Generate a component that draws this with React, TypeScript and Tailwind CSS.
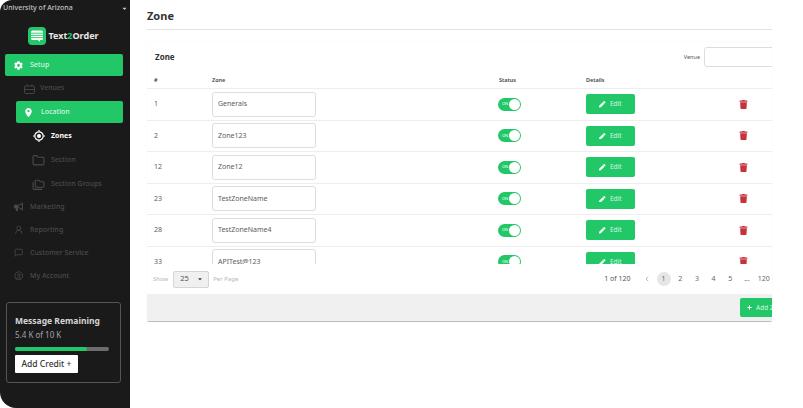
import React from "react";
import { FaCog, FaBullhorn, FaTrash, FaPen, FaCaretDown, FaPlus } from "react-icons/fa";
import { MdLocationOn } from "react-icons/md";
import { LuFolder, LuFolders, LuUserRound, LuMessageSquare, LuCircleUser, LuChevronLeft } from "react-icons/lu";

const rows = [
  ["1", "Generals"],
  ["2", "Zone123"],
  ["12", "Zone12"],
  ["23", "TestZoneName"],
  ["28", "TestZoneName4"],
  ["33", "APITest@123"],
];

function SubItem({ icon, label, active }: { icon: React.ReactNode; label: string; active?: boolean }) {
  return (
    <div className={`flex h-[24px] items-center text-[7px] ${active ? "font-bold text-white" : "font-medium text-[#4a4a4a]"}`}>
      <span className="flex w-[51px] justify-center pl-[26px] text-[13px]">{icon}</span>
      <span>{label}</span>
    </div>
  );
}

function MainItem({ icon, label }: { icon: React.ReactNode; label: string }) {
  return (
    <div className="flex h-[23px] items-center text-[7px] font-medium text-[#4a4a4a]">
      <span className="flex w-[30px] justify-center pl-[7px] text-[9.5px]">{icon}</span>
      <span>{label}</span>
    </div>
  );
}

function Logo() {
  return (
    <svg width="18" height="18" viewBox="0 0 18 18">
      <rect width="18" height="18" rx="4" fill="#22c768" />
      <path d="M4.5 3.5h9a1.5 1.5 0 0 1 1.5 1.5v6.5a1.5 1.5 0 0 1-1.5 1.5H12v1.8L9.7 13H4.5A1.5 1.5 0 0 1 3 11.5V5a1.5 1.5 0 0 1 1.5-1.5z" fill="#fff" />
      <path d="M3 6.2h12M3 8.4h12M3 10.6h12" stroke="#22c768" strokeWidth="0.9" />
    </svg>
  );
}

function VenueIcon() {
  return (
    <svg width="11" height="10" viewBox="0 0 11 10" fill="none" stroke="#4a4a4a" strokeWidth="0.9">
      <rect x="0.5" y="2" width="10" height="7.5" rx="1" />
      <path d="M0.5 5.5h10M3 2V0.5M8 2V0.5" />
    </svg>
  );
}

function ZoneTarget() {
  return (
    <svg width="12" height="12" viewBox="0 0 12 12" fill="none">
      <circle cx="6" cy="6" r="4.2" stroke="#fff" strokeWidth="1.2" />
      <circle cx="6" cy="6" r="2" fill="#fff" />
      <path d="M6 0v1.6M6 10.4V12M0 6h1.6M10.4 6H12" stroke="#fff" strokeWidth="1.2" />
    </svg>
  );
}

function Row({ id, name }: { id: string; name: string }) {
  return (
    <div className="grid h-[31.5px] shrink-0 grid-cols-[58px_287px_87px_138px_38px] items-center border-t border-[#eeeeee] pl-[7px] text-[7px] text-[#5c5c5c]">
      <span>{id}</span>
      <div className="flex h-[25px] w-[104px] items-center rounded-[3px] border border-[#dddddd] px-[5px]">{name}</div>
      <div className="-ml-[1px] flex h-[13px] w-[23px] items-center justify-between rounded-full bg-[#22c768] pl-[4px] pr-[1px] text-[4px] text-white">
        <span>ON</span>
        <span className="h-[11px] w-[11px] rounded-full bg-white" />
      </div>
      <div className="flex h-[20px] w-[49px] items-center justify-center gap-[4px] rounded-[2px] bg-[#22c768] text-[6.5px] text-[#d8f5e4]">
        <FaPen className="text-[6.5px] text-white" />
        <span>Edit</span>
      </div>
      <div className="flex justify-center text-[9px] text-[#c8323f]">
        <FaTrash />
      </div>
    </div>
  );
}

export default function App() {
  return (
    <div className="flex h-[408px] w-[803px] overflow-hidden bg-white font-['Noto_Sans',sans-serif]">
      <aside className="flex h-[408px] w-[130px] shrink-0 flex-col rounded-tl-[12px] rounded-bl-[16px] bg-[#1a1a1b]">
        <div className="flex h-[17px] items-center justify-between pl-[3px] pr-[2px] text-[7px] font-medium text-[#c4c4c4]">
          <span>University of Arizona</span>
          <FaCaretDown className="text-[7px]" />
        </div>
        <div className="mt-[10px] flex h-[18px] items-center justify-center gap-[2px] pr-[3px]">
          <Logo />
          <span className="text-[9px] font-bold text-[#e8e8e8]">
            Text<span className="text-[#22c768]">2</span>Order
          </span>
        </div>
        <div className="mx-[5px] mt-[9px] flex h-[22px] w-[118px] items-center rounded-[2px] bg-[#22c768] text-[7px] font-medium text-[#d8f5e4]">
          <FaCog className="ml-[9px] mr-[7px] text-[9px] text-white" />
          <span>Setup</span>
        </div>
        <div className="flex h-[25px] items-center text-[7px] font-medium text-[#4a4a4a]">
          <span className="ml-[24px] mr-[5px] flex"><VenueIcon /></span>
          <span>Venues</span>
        </div>
        <div className="ml-[16px] flex h-[22px] w-[107px] items-center rounded-[2px] bg-[#22c768] text-[7px] font-medium text-[#d8f5e4]">
          <MdLocationOn className="ml-[7px] mr-[7px] text-[11px] text-white" />
          <span>Location</span>
        </div>
        <div className="mt-[1px]">
          <SubItem icon={<ZoneTarget />} label="Zones" active />
          <SubItem icon={<LuFolder />} label="Section" />
          <SubItem icon={<LuFolders />} label="Section Groups" />
        </div>
        <div className="-mt-[0.5px]">
          <MainItem icon={<FaBullhorn />} label="Marketing" />
          <MainItem icon={<LuUserRound />} label="Reporting" />
          <MainItem icon={<LuMessageSquare />} label="Customer Service" />
          <MainItem icon={<LuCircleUser />} label="My Account" />
        </div>
        <div className="mb-[25px] ml-[6px] mr-[9px] mt-auto flex h-[81px] flex-col rounded-[3px] border-[1.5px] border-[#555555] px-[8px] pt-[12px]">
          <span className="text-[8.5px] font-bold leading-[12px] text-[#d6d6d6]">Message Remaining</span>
          <span className="mt-[2px] text-[8px] leading-[12px] text-[#a3a3a3]">5.4 K of 10 K</span>
          <div className="mt-[6px] h-[4px] w-[94px] rounded-full bg-[#6d6d6d]">
            <div className="h-[4px] w-[72px] rounded-full bg-[#22c768]" />
          </div>
          <div className="mt-[4px] flex h-[18px] w-[63px] items-center justify-center rounded-[1px] bg-white text-[8.5px] font-medium text-[#333333]">
            Add Credit +
          </div>
        </div>
      </aside>
      <main className="flex min-w-0 flex-1 flex-col pl-[17px] pr-[31px]">
        <div className="flex h-[30px] items-center border-b border-[#e3e3e3] pt-[3px] text-[11px] font-bold text-[#333333]">Zone</div>
        <section className="mt-[12px] flex h-[280px] flex-col overflow-hidden rounded-[2px] border-b border-[#bdbdbd] shadow-[0_0_2px_rgba(0,0,0,0.06)]">
          <div className="flex h-[30px] shrink-0 items-center pl-[8px]">
            <span className="text-[8px] font-bold text-[#333333]">Zone</span>
            <span className="ml-auto mr-[4px] text-[5.5px] text-[#555555]">Venue</span>
            <div className="-mr-[32px] h-[20px] w-[100px] shrink-0 rounded-[3px] border border-[#dddddd]" />
          </div>
          <div className="grid h-[16px] shrink-0 grid-cols-[58px_287px_87px_157px] items-center pl-[7px] text-[5.5px] font-semibold text-[#444444]">
            <span>#</span>
            <span>Zone</span>
            <span>Status</span>
            <span>Details</span>
          </div>
          <div className="flex h-[176px] shrink-0 flex-col overflow-hidden">
            {rows.map(([id, name]) => (
              <Row key={id} id={id} name={name} />
            ))}
          </div>
          <div className="flex h-[30px] shrink-0 items-center pl-[6px] text-[6px] text-[#b5b5b5]">
            <span>Show</span>
            <div className="ml-[5px] mr-[4px] flex h-[17px] w-[36px] items-center justify-between rounded-[2px] border border-[#d5d5d5] bg-[#f0f0f0] pl-[6px] pr-[5px] text-[7.5px] text-[#555555]">
              <span>25</span>
              <FaCaretDown className="text-[6px] text-[#444444]" />
            </div>
            <span>Per Page</span>
            <span className="ml-auto mr-[8px] text-[7px] text-[#555555]">1 of 120</span>
            <div className="flex items-center text-[7px] text-[#666666]">
              {["<", "1", "2", "3", "4", "5", "...", "120"].map((p) => (
                <span key={p} className="flex w-[16.7px] justify-center">
                  {p === "<" ? (
                    <LuChevronLeft className="text-[8px] text-[#999999]" />
                  ) : (
                    <span className={`flex h-[14px] w-[14px] items-center justify-center rounded-full ${p === "1" ? "bg-[#e6e6e6]" : ""}`}>{p}</span>
                  )}
                </span>
              ))}
            </div>
          </div>
          <div className="flex h-[27px] shrink-0 items-center justify-end bg-[#f0f0f0]">
            <div className="-mr-[18px] flex h-[19px] w-[50px] shrink-0 items-center gap-[4px] whitespace-nowrap rounded-[2px] bg-[#22c768] pl-[7px] text-[6.5px] text-[#d8f5e4]">
              <FaPlus className="text-[5px] text-white" />
              <span>Add Zone</span>
            </div>
          </div>
        </section>
      </main>
    </div>
  );
}
